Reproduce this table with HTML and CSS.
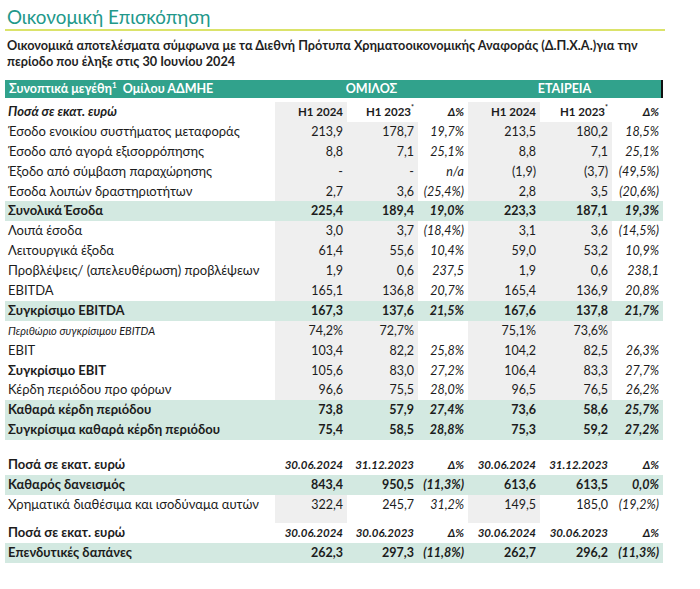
FILE: index.html
```html
<!DOCTYPE html>
<html lang="el">
<head>
<meta charset="utf-8">
<title>Οικονομική Επισκόπηση</title>
<link rel="stylesheet" href="styles.css">
</head>
<body>
<div class="page">
  <h1 class="title">Οικονομική Επισκόπηση</h1>
  <p class="subtitle">Οικονομικά αποτελέσματα σύμφωνα με τα Διεθνή Πρότυπα Χρηματοοικονομικής Αναφοράς (Δ.Π.Χ.Α.)για την περίοδο που έληξε στις 30 Ιουνίου 2024</p>

  <div class="table">
    <div class="band">
      <div class="band-title">Συνοπτικά μεγέθη<sup>1</sup>&nbsp; Ομίλου ΑΔΜΗΕ</div>
      <div class="band-group">ΟΜΙΛΟΣ</div>
      <div class="band-group band-last">ΕΤΑΙΡΕΙΑ</div>
    </div>

    <div class="row head">
      <div class="lbl bi">Ποσά σε εκατ. ευρώ</div>
      <div class="c g b d">H1 2024</div><div class="c b d">H1 2023<sup class="ast">*</sup></div><div class="c bi d">Δ%</div>
      <div class="c g b d">H1 2024</div><div class="c b d">H1 2023<sup class="ast">*</sup></div><div class="c bi d">Δ%</div>
    </div>

    <div class="row">
      <div class="lbl">Έσοδο ενοικίου συστήματος μεταφοράς</div>
      <div class="c g">213,9</div><div class="c g">178,7</div><div class="c i">19,7%</div>
      <div class="c g">213,5</div><div class="c g">180,2</div><div class="c i">18,5%</div>
    </div>
    <div class="row">
      <div class="lbl">Έσοδο από αγορά εξισορρόπησης</div>
      <div class="c g">8,8</div><div class="c g">7,1</div><div class="c i">25,1%</div>
      <div class="c g">8,8</div><div class="c g">7,1</div><div class="c i">25,1%</div>
    </div>
    <div class="row">
      <div class="lbl">Έξοδο από σύμβαση παραχώρησης</div>
      <div class="c g">-</div><div class="c g">-</div><div class="c i">n/a</div>
      <div class="c g">(1,9)</div><div class="c g">(3,7)</div><div class="c i">(49,5%)</div>
    </div>
    <div class="row">
      <div class="lbl">Έσοδα λοιπών δραστηριοτήτων</div>
      <div class="c g">2,7</div><div class="c g">3,6</div><div class="c i">(25,4%)</div>
      <div class="c g">2,8</div><div class="c g">3,5</div><div class="c i">(20,6%)</div>
    </div>
    <div class="row hl">
      <div class="lbl b">Συνολικά Έσοδα</div>
      <div class="c b">225,4</div><div class="c b">189,4</div><div class="c bi">19,0%</div>
      <div class="c b">223,3</div><div class="c b">187,1</div><div class="c bi">19,3%</div>
    </div>
    <div class="row">
      <div class="lbl">Λοιπά έσοδα</div>
      <div class="c g">3,0</div><div class="c g">3,7</div><div class="c i">(18,4%)</div>
      <div class="c g">3,1</div><div class="c g">3,6</div><div class="c i">(14,5%)</div>
    </div>
    <div class="row">
      <div class="lbl">Λειτουργικά έξοδα</div>
      <div class="c g">61,4</div><div class="c g">55,6</div><div class="c i">10,4%</div>
      <div class="c g">59,0</div><div class="c g">53,2</div><div class="c i">10,9%</div>
    </div>
    <div class="row">
      <div class="lbl">Προβλέψεις/ (απελευθέρωση) προβλέψεων</div>
      <div class="c g">1,9</div><div class="c g">0,6</div><div class="c i">237,5</div>
      <div class="c g">1,9</div><div class="c g">0,6</div><div class="c i">238,1</div>
    </div>
    <div class="row">
      <div class="lbl">EBITDA</div>
      <div class="c g">165,1</div><div class="c g">136,8</div><div class="c i">20,7%</div>
      <div class="c g">165,4</div><div class="c g">136,9</div><div class="c i">20,8%</div>
    </div>
    <div class="row hl">
      <div class="lbl b">Συγκρίσιμο EBITDA</div>
      <div class="c b">167,3</div><div class="c b">137,6</div><div class="c bi">21,5%</div>
      <div class="c b">167,6</div><div class="c b">137,8</div><div class="c bi">21,7%</div>
    </div>
    <div class="row">
      <div class="lbl i small">Περιθώριο συγκρίσιμου EBITDA</div>
      <div class="c g">74,2%</div><div class="c g">72,7%</div><div class="c"></div>
      <div class="c g">75,1%</div><div class="c g">73,6%</div><div class="c"></div>
    </div>
    <div class="row">
      <div class="lbl">EBIT</div>
      <div class="c g">103,4</div><div class="c g">82,2</div><div class="c i">25,8%</div>
      <div class="c g">104,2</div><div class="c g">82,5</div><div class="c i">26,3%</div>
    </div>
    <div class="row">
      <div class="lbl b">Συγκρίσιμο EBIT</div>
      <div class="c g">105,6</div><div class="c g">83,0</div><div class="c i">27,2%</div>
      <div class="c g">106,4</div><div class="c g">83,3</div><div class="c i">27,7%</div>
    </div>
    <div class="row">
      <div class="lbl">Κέρδη περιόδου προ φόρων</div>
      <div class="c g">96,6</div><div class="c g">75,5</div><div class="c i">28,0%</div>
      <div class="c g">96,5</div><div class="c g">76,5</div><div class="c i">26,2%</div>
    </div>
    <div class="row hl">
      <div class="lbl b">Καθαρά κέρδη περιόδου</div>
      <div class="c b">73,8</div><div class="c b">57,9</div><div class="c bi">27,4%</div>
      <div class="c b">73,6</div><div class="c b">58,6</div><div class="c bi">25,7%</div>
    </div>
    <div class="row hl">
      <div class="lbl b">Συγκρίσιμα καθαρά κέρδη περιόδου</div>
      <div class="c b">75,4</div><div class="c b">58,5</div><div class="c bi">28,8%</div>
      <div class="c b">75,3</div><div class="c b">59,2</div><div class="c bi">27,2%</div>
    </div>
  </div>

  <div class="table second">
    <div class="row">
      <div class="lbl b">Ποσά σε εκατ. ευρώ</div>
      <div class="c bi d">30.06.2024</div><div class="c bi d">31.12.2023</div><div class="c bi d">Δ%</div>
      <div class="c bi d">30.06.2024</div><div class="c bi d">31.12.2023</div><div class="c bi d">Δ%</div>
    </div>
    <div class="row hl">
      <div class="lbl b">Καθαρός δανεισμός</div>
      <div class="c b">843,4</div><div class="c b">950,5</div><div class="c bi">(11,3%)</div>
      <div class="c b">613,6</div><div class="c b">613,5</div><div class="c bi">0,0%</div>
    </div>
    <div class="row tall">
      <div class="lbl">Χρηματικά διαθέσιμα και ισοδύναμα αυτών</div>
      <div class="c g">322,4</div><div class="c">245,7</div><div class="c i">31,2%</div>
      <div class="c g">149,5</div><div class="c">185,0</div><div class="c i">(19,2%)</div>
    </div>
    <div class="row">
      <div class="lbl b">Ποσά σε εκατ. ευρώ</div>
      <div class="c bi d">30.06.2024</div><div class="c bi d">30.06.2023</div><div class="c bi d">Δ%</div>
      <div class="c bi d">30.06.2024</div><div class="c bi d">30.06.2023</div><div class="c bi d">Δ%</div>
    </div>
    <div class="row hl">
      <div class="lbl b">Επενδυτικές δαπάνες</div>
      <div class="c b">262,3</div><div class="c b">297,3</div><div class="c bi">(11,8%)</div>
      <div class="c b">262,7</div><div class="c b">296,2</div><div class="c bi">(11,3%)</div>
    </div>
  </div>
</div>
</body>
</html>
```

FILE: styles.css
```css
* { box-sizing: border-box; }
html, body { margin: 0; padding: 0; background: #ffffff; }
body {
  font-family: Lato, "Open Sans", "Noto Sans", sans-serif;
  color: #1c1c1c;
}
.page { padding: 7px 0 0 5px; width: 700px; }

.title {
  margin: 0;
  padding: 0 0 2px 2px;
  width: 660px;
  font-size: 18.8px;
  font-weight: 400;
  line-height: 20px;
  color: #22988a;
  border-bottom: 2px solid #dbe36a;
}
.subtitle {
  margin: 6px 0 0 2px;
  width: 650px;
  font-size: 12.7px;
  font-weight: 700;
  line-height: 16px;
  color: #1f1f1f;
}

.table { margin-top: 11px; width: 658px; font-size: 13px; }
.table.second { margin-top: 15px; }

.band {
  display: grid;
  grid-template-columns: 270px 193px 195px;
  height: 18px;
  background: #31a28c;
  color: #ffffff;
  font-weight: 700;
  line-height: 18px;
  font-size: 12.5px;
}
.band-title { padding-left: 4px; }
.band-title sup { font-size: 8px; line-height: 0; vertical-align: 5px; }
.band-group { text-align: center; }
.band-last { border-right: 2px solid #111; }

.row {
  display: grid;
  grid-template-columns: 270px 72px 71px 50px 72px 72px 51px;
  height: 19.9px;
  line-height: 19.9px;
}
.table > .row.head { margin-top: 4px; }
.row.tall { height: 28px; }
.row.hl { background: #d3e9e1; }

.lbl { padding-left: 3px; white-space: nowrap; }
.c { text-align: right; padding-right: 4px; white-space: nowrap; font-size: 12.5px; }
.c.d { font-size: 11.5px; }
.g { background: #efefef; }
.b { font-weight: 700; }
.i { font-style: italic; }
.bi { font-weight: 700; font-style: italic; }
.small { font-size: 11px; }
.ast { font-size: 7px; line-height: 0; vertical-align: 6px; }
```
